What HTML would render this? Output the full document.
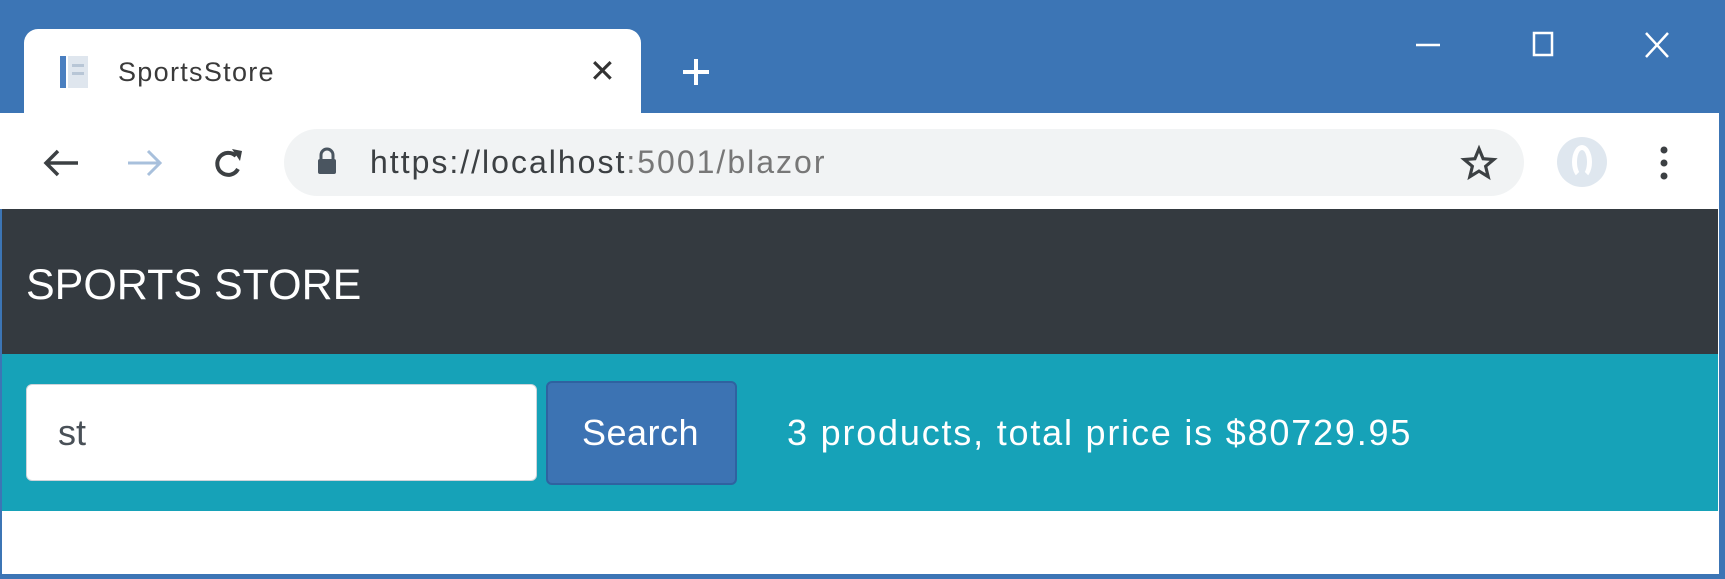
<!DOCTYPE html>
<html><head><style>
*{margin:0;padding:0;box-sizing:border-box}
body{width:1725px;height:579px;overflow:hidden;background:#fff;font-family:"Liberation Sans",sans-serif;position:relative}
.abs{position:absolute}
</style></head><body>
<div class="abs" style="left:0;top:0;width:1725px;height:579px;border:2px solid #3c75b5;border-top:0;border-right-width:6px;border-bottom-width:5px"></div>
<div class="abs" style="left:0;top:0;width:1719px;height:114px;background:#3c75b5"></div>
<div class="abs" style="left:24px;top:29px;width:617px;height:90px;background:#fff;border-radius:14px 14px 0 0"></div>
<svg class="abs" style="left:56px;top:52px" width="42" height="42" viewBox="0 0 42 42"><rect x="4" y="4" width="6" height="32" fill="#4a7fc0"/><rect x="12" y="4" width="20" height="32" fill="#dfe6ee"/><rect x="16" y="12" width="12" height="3" fill="#b8c6d6"/><rect x="16" y="20" width="12" height="3" fill="#b8c6d6"/></svg>
<div class="abs" style="left:118px;top:57px;font-size:27px;color:#3a3a3a;letter-spacing:1.3px">SportsStore</div>
<div class="abs" style="left:589px;top:52px;font-size:32px;color:#333">✕</div>
<svg class="abs" style="left:681px;top:57px" width="30" height="30"><path d="M15 2V28M2 15H28" stroke="#fff" stroke-width="4"/></svg>
<svg class="abs" style="left:1412px;top:30px" width="290" height="30"><path d="M4 15H28" stroke="#fff" stroke-width="2.5"/><rect x="122" y="3" width="18" height="22" fill="none" stroke="#fff" stroke-width="2.5"/><path d="M234 3L256 27M256 3L234 27" stroke="#fff" stroke-width="2.5"/></svg>
<div class="abs" style="left:0;top:113px;width:1719px;height:96px;background:#fff"></div>
<div class="abs" style="left:284px;top:129px;width:1240px;height:67px;background:#f1f3f4;border-radius:34px"></div>
<svg class="abs" style="left:40px;top:143px" width="220" height="40"><path d="M38 20H6M18 8L6 20L18 32" fill="none" stroke="#3c4043" stroke-width="3.5"/><path d="M88 20H120M108 8L120 20L108 32" fill="none" stroke="#a8c0dc" stroke-width="3"/><path d="M196 13A11 11 0 1 0 198 26" fill="none" stroke="#3c4043" stroke-width="4"/><path d="M192 6L202 8L200 18Z" fill="#3c4043"/></svg>
<svg class="abs" style="left:315px;top:146px" width="24" height="32"><path d="M6 13V9A6 6 0 0 1 18 9V13" fill="none" stroke="#4a5560" stroke-width="3"/><rect x="3" y="13" width="18" height="15" rx="2" fill="#4a5560"/></svg>
<div class="abs" style="left:370px;top:144px;font-size:32px;color:#3c4043;letter-spacing:2px">https://<span>localhost</span><span style="color:#777">:5001/blazor</span></div>
<svg class="abs" style="left:1460px;top:144px" width="38" height="38" viewBox="0 0 24 24"><path d="M12 3L14.6 9.3L21.3 9.8L16.2 14.1L17.8 20.7L12 17.1L6.2 20.7L7.8 14.1L2.7 9.8L9.4 9.3Z" fill="none" stroke="#3c4043" stroke-width="2"/></svg>
<div class="abs" style="left:1557px;top:137px;width:50px;height:50px;border-radius:50%;background:#dfe7ef"></div>
<div class="abs" style="left:1572px;top:145px;width:20px;height:34px;border-radius:50%;border:5px solid #fff;border-bottom-color:transparent"></div>
<svg class="abs" style="left:1658px;top:145px" width="12" height="36"><circle cx="6" cy="5" r="3.5" fill="#3c4043"/><circle cx="6" cy="18" r="3.5" fill="#3c4043"/><circle cx="6" cy="31" r="3.5" fill="#3c4043"/></svg>
<div class="abs" style="left:2px;top:209px;width:1716px;height:145px;background:#343a40"></div>
<div class="abs" style="left:26px;top:260px;font-size:43px;color:#fff;line-height:50px">SPORTS STORE</div>
<div class="abs" style="left:2px;top:354px;width:1716px;height:157px;background:#16a2b8"></div>
<div class="abs" style="left:26px;top:384px;width:511px;height:97px;background:#fff;border-radius:6px;border:1px solid #ced4da"></div>
<div class="abs" style="left:58px;top:413px;font-size:36px;color:#495057;line-height:40px">st</div>
<div class="abs" style="left:546px;top:381px;width:191px;height:104px;background:#3c73b3;border-radius:6px;border:2px solid #2f62a0"></div>
<div class="abs" style="left:582px;top:413px;font-size:36px;color:#fff;line-height:40px;letter-spacing:0.5px">Search</div>
<div class="abs" style="left:787px;top:413px;font-size:36px;color:#fff;line-height:40px;letter-spacing:1.8px">3 products, total price is $80729.95</div>
</body></html>
